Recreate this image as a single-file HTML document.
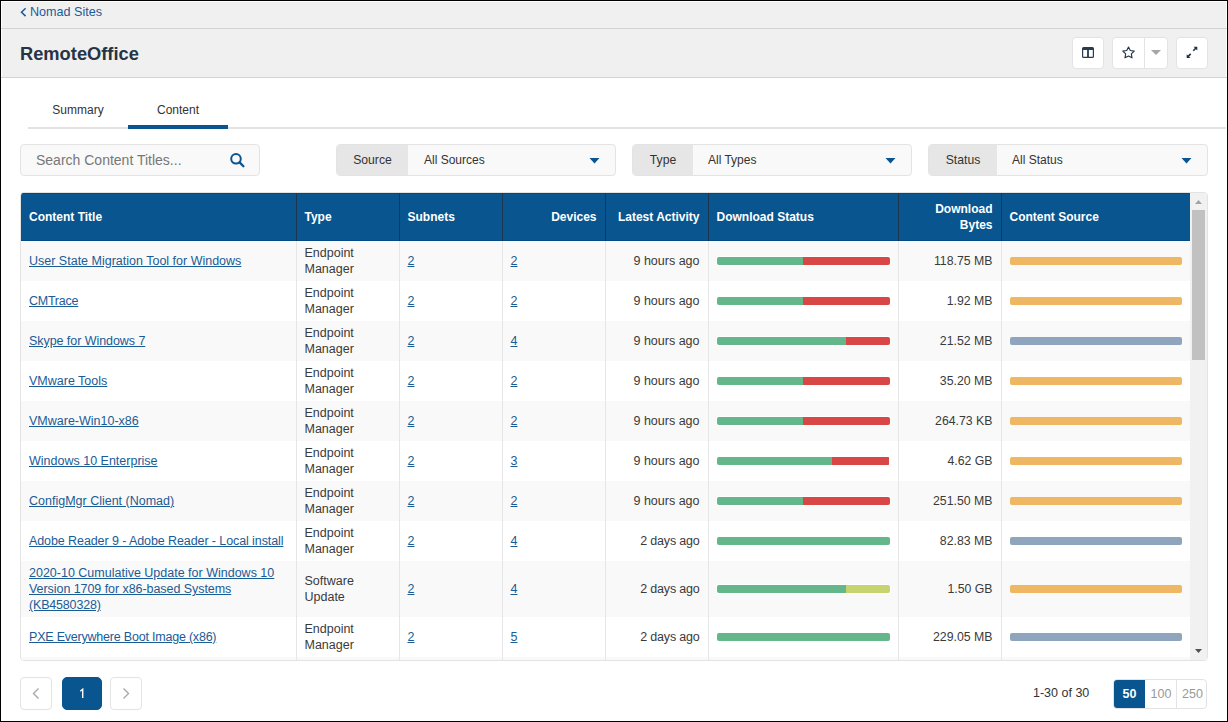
<!DOCTYPE html>
<html><head><meta charset="utf-8">
<style>
*{box-sizing:border-box;margin:0;padding:0}
html,body{width:1228px;height:722px;overflow:hidden;background:#fff;font-family:"Liberation Sans",sans-serif;color:#333}
.abs{position:absolute}
#frame{left:0;top:0;width:1228px;height:722px;border:1px solid #000;z-index:50;pointer-events:none}
#crumbbar{left:2px;top:2px;width:1224px;height:26px;background:#f0f0f0}
#l1{left:1px;top:28px;width:1226px;height:1px;background:#d3d3d3}
#l2{left:1px;top:77px;width:1226px;height:1px;background:#d3d3d3}
#crumb{left:30px;top:4px;font-size:12.6px;line-height:16px;color:#1a5c96;white-space:nowrap}
#hdr{left:2px;top:29px;width:1224px;height:48px;background:#f0f0f0}
#title{left:20px;top:44px;font-size:18.3px;font-weight:bold;color:#263445;line-height:20px;white-space:nowrap}
.hbtn{position:absolute;top:37px;height:32px;background:#fff;border:1px solid #e3e3e3;border-radius:4px}
#tabline{left:28px;top:127px;width:1198px;height:2px;background:#e3e3e3}
.tab{position:absolute;top:78px;height:51px;font-size:12px;color:#333;text-align:center;line-height:16px;padding-top:24px}
#search{left:20px;top:144px;width:240px;height:32px;background:#f9f9f9;border:1px solid #e3e3e3;border-radius:4px}
#ph{left:36px;top:152px;font-size:14px;line-height:16px;color:#777;white-space:nowrap}
.flt{position:absolute;top:144px;height:32px;background:#f9f9f9;border:1px solid #e3e3e3;border-radius:4px;overflow:hidden}
.flt .lb{position:absolute;left:0;top:0;height:30px;background:#e6e6e6;font-size:12.2px;line-height:30px;color:#333;text-align:center}
.flt .vl{position:absolute;top:0;height:30px;font-size:12px;line-height:30px;color:#333;white-space:nowrap}
.flt svg{position:absolute;top:12px}
#grid{left:20px;top:192px;width:1188px;height:469px;border:1px solid #e3e3e3;border-radius:4px;overflow:hidden;background:#fff}
#tbl{position:absolute;left:0;top:0;width:1169px;border-collapse:collapse;table-layout:fixed}
#tbl th{background:#08558f;color:#fff;font-size:12px;font-weight:bold;text-align:left;height:48px;padding:0 8px;border-left:1px solid #1e3550;line-height:16px;vertical-align:middle}
#tbl th:first-child{border-left:none}
#tbl th{box-shadow:inset 0 1px #004a87,inset 0 -1px #004a87}
#tbl tbody tr:first-child td{box-shadow:inset 0 1px #fff}
#tbl td{font-size:12.5px;line-height:16px;padding:4px 8px;border-left:1px solid #e6e6e6;vertical-align:middle;color:#3a3a3a;white-space:nowrap}
#tbl td:first-child{border-left:none}
#tbl .r{text-align:right}
#tbl td.c7{font-size:12.3px}
#tbl tr.odd td{background:#f9f9f9}
#tbl a{color:#1a5c96;text-decoration:underline}
.bar{position:relative;height:8px;border-radius:2px;overflow:hidden;display:flex;box-shadow:0 0 0 1px #fff}
.bar i{display:block;height:8px}
.sg{background:#63b78b}.sr{background:#d84646}.sy{background:#c6d36f}
.so{background:#efb663}.sb{background:#8fa5bd}
.src{box-shadow:none}
#sb{position:absolute;left:1169px;top:0;width:17px;height:467px;background:#f1f1f1}
#thumb{position:absolute;left:2px;top:17px;width:13px;height:150px;background:#c1c1c1}
.pbtn{position:absolute;top:677px;height:33px;border:1px solid #e3e3e3;border-radius:4px;background:#fff}
#pg1{left:62px;width:40px;background:#08558f;border-color:#08558f;color:#fff;font-size:12.5px;line-height:31px;border-radius:5px;text-align:center}
#count{left:1033px;top:685px;font-size:12.5px;line-height:16px;color:#333;white-space:nowrap}
#seg{left:1113px;top:679px;width:94px;height:30px;border:1px solid #e3e3e3;border-radius:4px;overflow:hidden;background:#fff}
#seg div{position:absolute;top:0;height:28px;line-height:28px;font-size:12.5px;text-align:center;color:#999}
</style></head><body>
<div id="frame" class="abs"></div>
<div id="crumbbar" class="abs"></div>
<svg class="abs" style="left:0;top:0" width="40" height="28"><path d="M25.6,8.3 L21.5,12.2 L25.6,16.1" fill="none" stroke="#1a5c96" stroke-width="1.5"/></svg>
<div id="crumb" class="abs">Nomad Sites</div>
<div id="hdr" class="abs"></div><div id="l1" class="abs"></div><div id="l2" class="abs"></div>
<div id="title" class="abs">RemoteOffice</div>
<div class="hbtn" style="left:1072px;width:32px"></div>
<div class="hbtn" style="left:1112px;width:56px"><div class="abs" style="left:31px;top:0;width:1px;height:30px;background:#e3e3e3"></div></div>
<div class="hbtn" style="left:1176px;width:32px"></div>
<svg class="abs" style="left:0;top:0;z-index:5" width="1228" height="80">
  <path fill="#2b3b4e" fill-rule="evenodd" d="M1083.5,47 h9 a1.5,1.5 0 0 1 1.5,1.5 v8 a1.5,1.5 0 0 1 -1.5,1.5 h-9 a1.5,1.5 0 0 1 -1.5,-1.5 v-8 a1.5,1.5 0 0 1 1.5,-1.5 Z M1083.2,50 v6.8 h3.9 v-6.8 Z M1088.9,50 v6.8 h3.9 v-6.8 Z"/>
  <polygon fill="none" stroke="#223247" stroke-width="1.1" stroke-linejoin="round" points="1128.50,47.00 1130.26,50.57 1134.21,51.15 1131.35,53.93 1132.03,57.85 1128.50,56.00 1124.97,57.85 1125.65,53.93 1122.79,51.15 1126.74,50.57"/>
  <polygon fill="#a6a6a6" points="1151,50 1161,50 1156,55"/>
  <path fill="#1f2f44" d="M1197.3,46.7 L1193.6,46.7 L1197.3,50.4 Z M1186.7,57.9 L1186.7,54.2 L1190.4,57.9 Z"/>
  <path stroke="#1f2f44" stroke-width="1.6" d="M1196,48 L1193.3,50.7 M1188,56.6 L1190.7,53.9"/>
</svg>
<div id="tabline" class="abs"></div>
<div class="tab" style="left:28px;width:100px">Summary</div>
<div class="tab" style="left:128px;width:100px;border-bottom:4px solid #08558f">Content</div>

<div id="search" class="abs"></div>
<div id="ph" class="abs">Search Content Titles...</div>
<svg class="abs" style="left:0;top:140px" width="260" height="40">
  <circle cx="236" cy="18.8" r="4.8" fill="none" stroke="#0a5591" stroke-width="2"/>
  <path d="M239.6,22.4 L243.4,26.2" stroke="#0a5591" stroke-width="2.3" stroke-linecap="round"/>
</svg>

<div class="flt" style="left:336px;width:280px"><div class="lb" style="width:71px">Source</div><div class="vl" style="left:87px">All Sources</div>
<svg style="left:252px" width="12" height="8"><polygon points="0.5,1 10.5,1 5.5,6.5" fill="#0a5591"/></svg></div>
<div class="flt" style="left:632px;width:280px"><div class="lb" style="width:60px">Type</div><div class="vl" style="left:75px">All Types</div>
<svg style="left:252px" width="12" height="8"><polygon points="0.5,1 10.5,1 5.5,6.5" fill="#0a5591"/></svg></div>
<div class="flt" style="left:928px;width:280px"><div class="lb" style="width:68px">Status</div><div class="vl" style="left:83px">All Status</div>
<svg style="left:252px" width="12" height="8"><polygon points="0.5,1 10.5,1 5.5,6.5" fill="#0a5591"/></svg></div>

<div id="grid" class="abs">
<table id="tbl">
<colgroup><col style="width:275px"><col style="width:103px"><col style="width:103px"><col style="width:103px"><col style="width:103px"><col style="width:190px"><col style="width:103px"><col style="width:189px"></colgroup>
<thead><tr><th>Content Title</th><th>Type</th><th>Subnets</th><th class="r" style="text-align:right">Devices</th><th style="text-align:right">Latest Activity</th><th>Download Status</th><th style="text-align:right">Download<br>Bytes</th><th>Content Source</th></tr></thead>
<tbody>
<tr class="odd" style="height:40px"><td class="c1"><a>User State Migration Tool for Windows</a></td><td class="c2">Endpoint<br>Manager</td><td class="c3"><a>2</a></td><td class="c4"><a>2</a></td><td class="c5 r">9 hours ago</td><td class="c6"><div class="bar"><i class="sg" style="width:50%"></i><i class="sr" style="width:50%"></i></div></td><td class="c7 r">118.75 MB</td><td class="c8"><div class="bar src so"></div></td></tr>
<tr class="even" style="height:40px"><td class="c1"><a><span style="letter-spacing:-0.25px">CMTrace</span></a></td><td class="c2">Endpoint<br>Manager</td><td class="c3"><a>2</a></td><td class="c4"><a>2</a></td><td class="c5 r">9 hours ago</td><td class="c6"><div class="bar"><i class="sg" style="width:50%"></i><i class="sr" style="width:50%"></i></div></td><td class="c7 r">1.92 MB</td><td class="c8"><div class="bar src so"></div></td></tr>
<tr class="odd" style="height:40px"><td class="c1"><a><span style="letter-spacing:-0.06px">Skype for Windows 7</span></a></td><td class="c2">Endpoint<br>Manager</td><td class="c3"><a>2</a></td><td class="c4"><a>4</a></td><td class="c5 r">9 hours ago</td><td class="c6"><div class="bar"><i class="sg" style="width:75%"></i><i class="sr" style="width:25%"></i></div></td><td class="c7 r">21.52 MB</td><td class="c8"><div class="bar src sb"></div></td></tr>
<tr class="even" style="height:40px"><td class="c1"><a>VMware Tools</a></td><td class="c2">Endpoint<br>Manager</td><td class="c3"><a>2</a></td><td class="c4"><a>2</a></td><td class="c5 r">9 hours ago</td><td class="c6"><div class="bar"><i class="sg" style="width:50%"></i><i class="sr" style="width:50%"></i></div></td><td class="c7 r">35.20 MB</td><td class="c8"><div class="bar src so"></div></td></tr>
<tr class="odd" style="height:40px"><td class="c1"><a>VMware-Win10-x86</a></td><td class="c2">Endpoint<br>Manager</td><td class="c3"><a>2</a></td><td class="c4"><a>2</a></td><td class="c5 r">9 hours ago</td><td class="c6"><div class="bar"><i class="sg" style="width:50%"></i><i class="sr" style="width:50%"></i></div></td><td class="c7 r">264.73 KB</td><td class="c8"><div class="bar src so"></div></td></tr>
<tr class="even" style="height:40px"><td class="c1"><a>Windows 10 Enterprise</a></td><td class="c2">Endpoint<br>Manager</td><td class="c3"><a>2</a></td><td class="c4"><a>3</a></td><td class="c5 r">9 hours ago</td><td class="c6"><div class="bar"><i class="sg" style="width:66.67%"></i><i class="sr" style="width:33.33%"></i></div></td><td class="c7 r">4.62 GB</td><td class="c8"><div class="bar src so"></div></td></tr>
<tr class="odd" style="height:40px"><td class="c1"><a>ConfigMgr Client (Nomad)</a></td><td class="c2">Endpoint<br>Manager</td><td class="c3"><a>2</a></td><td class="c4"><a>2</a></td><td class="c5 r">9 hours ago</td><td class="c6"><div class="bar"><i class="sg" style="width:50%"></i><i class="sr" style="width:50%"></i></div></td><td class="c7 r">251.50 MB</td><td class="c8"><div class="bar src so"></div></td></tr>
<tr class="even" style="height:40px"><td class="c1"><a><span style="letter-spacing:-0.09px">Adobe Reader 9 - Adobe Reader - Local install</span></a></td><td class="c2">Endpoint<br>Manager</td><td class="c3"><a>2</a></td><td class="c4"><a>4</a></td><td class="c5 r"><span style="letter-spacing:-0.2px">2 days ago</span></td><td class="c6"><div class="bar"><i class="sg" style="width:100%"></i></div></td><td class="c7 r">82.83 MB</td><td class="c8"><div class="bar src sb"></div></td></tr>
<tr class="odd" style="height:56px"><td class="c1"><a>2020-10 Cumulative Update for Windows 10<br><span style="letter-spacing:-0.06px">Version 1709 for x86-based Systems</span><br><span style="letter-spacing:-0.18px">(KB4580328)</span></a></td><td class="c2">Software<br>Update</td><td class="c3"><a>2</a></td><td class="c4"><a>4</a></td><td class="c5 r"><span style="letter-spacing:-0.2px">2 days ago</span></td><td class="c6"><div class="bar"><i class="sg" style="width:75%"></i><i class="sy" style="width:25%"></i></div></td><td class="c7 r">1.50 GB</td><td class="c8"><div class="bar src so"></div></td></tr>
<tr class="even" style="height:40px"><td class="c1"><a><span style="letter-spacing:-0.21px">PXE Everywhere Boot Image (x86)</span></a></td><td class="c2">Endpoint<br>Manager</td><td class="c3"><a>2</a></td><td class="c4"><a>5</a></td><td class="c5 r"><span style="letter-spacing:-0.2px">2 days ago</span></td><td class="c6"><div class="bar"><i class="sg" style="width:100%"></i></div></td><td class="c7 r">229.05 MB</td><td class="c8"><div class="bar src sb"></div></td></tr>
<tr class="odd" style="height:40px"><td class="c1"><a>Another Content Item</a></td><td class="c2">Endpoint<br>Manager</td><td class="c3"><a>2</a></td><td class="c4"><a>2</a></td><td class="c5 r"><span style="letter-spacing:-0.2px">2 days ago</span></td><td class="c6"><div class="bar"><i class="sg" style="width:100%"></i></div></td><td class="c7 r">10.00 MB</td><td class="c8"><div class="bar src so"></div></td></tr>
</tbody></table>
<div id="sb"><div id="thumb"></div>
<svg class="abs" style="left:0;top:0" width="17" height="467"><polygon points="5,11 12,11 8.5,7" fill="#a3a3a3"/><polygon points="5,456 12,456 8.5,460" fill="#505050"/></svg>
</div>
</div>

<div class="pbtn" style="left:20px;width:32px"><svg class="abs" style="left:0;top:0" width="30" height="30"><path d="M17.5,10.5 L12.5,15.5 L17.5,20.5" fill="none" stroke="#a8a8a8" stroke-width="1.4"/></svg></div>
<div id="pg1" class="pbtn"><svg class="abs" style="left:-1px;top:-1px" width="40" height="33"><path d="M18.3,14.2 L20.7,12.2 L20.7,21" fill="none" stroke="#fff" stroke-width="1.4" stroke-linejoin="miter"/></svg></div>
<div class="pbtn" style="left:110px;width:32px"><svg class="abs" style="left:0;top:0" width="30" height="30"><path d="M12.5,10.5 L17.5,15.5 L12.5,20.5" fill="none" stroke="#a8a8a8" stroke-width="1.4"/></svg></div>
<div id="count" class="abs">1-30 of 30</div>
<div id="seg" class="abs">
  <div style="left:0;width:31px;background:#08558f;color:#fff;font-weight:bold">50</div>
  <div style="left:31px;width:32px">100</div>
  <div style="left:62px;width:1px;background:#e3e3e3"></div>
  <div style="left:63px;width:31px">250</div>
</div>
</body></html>
